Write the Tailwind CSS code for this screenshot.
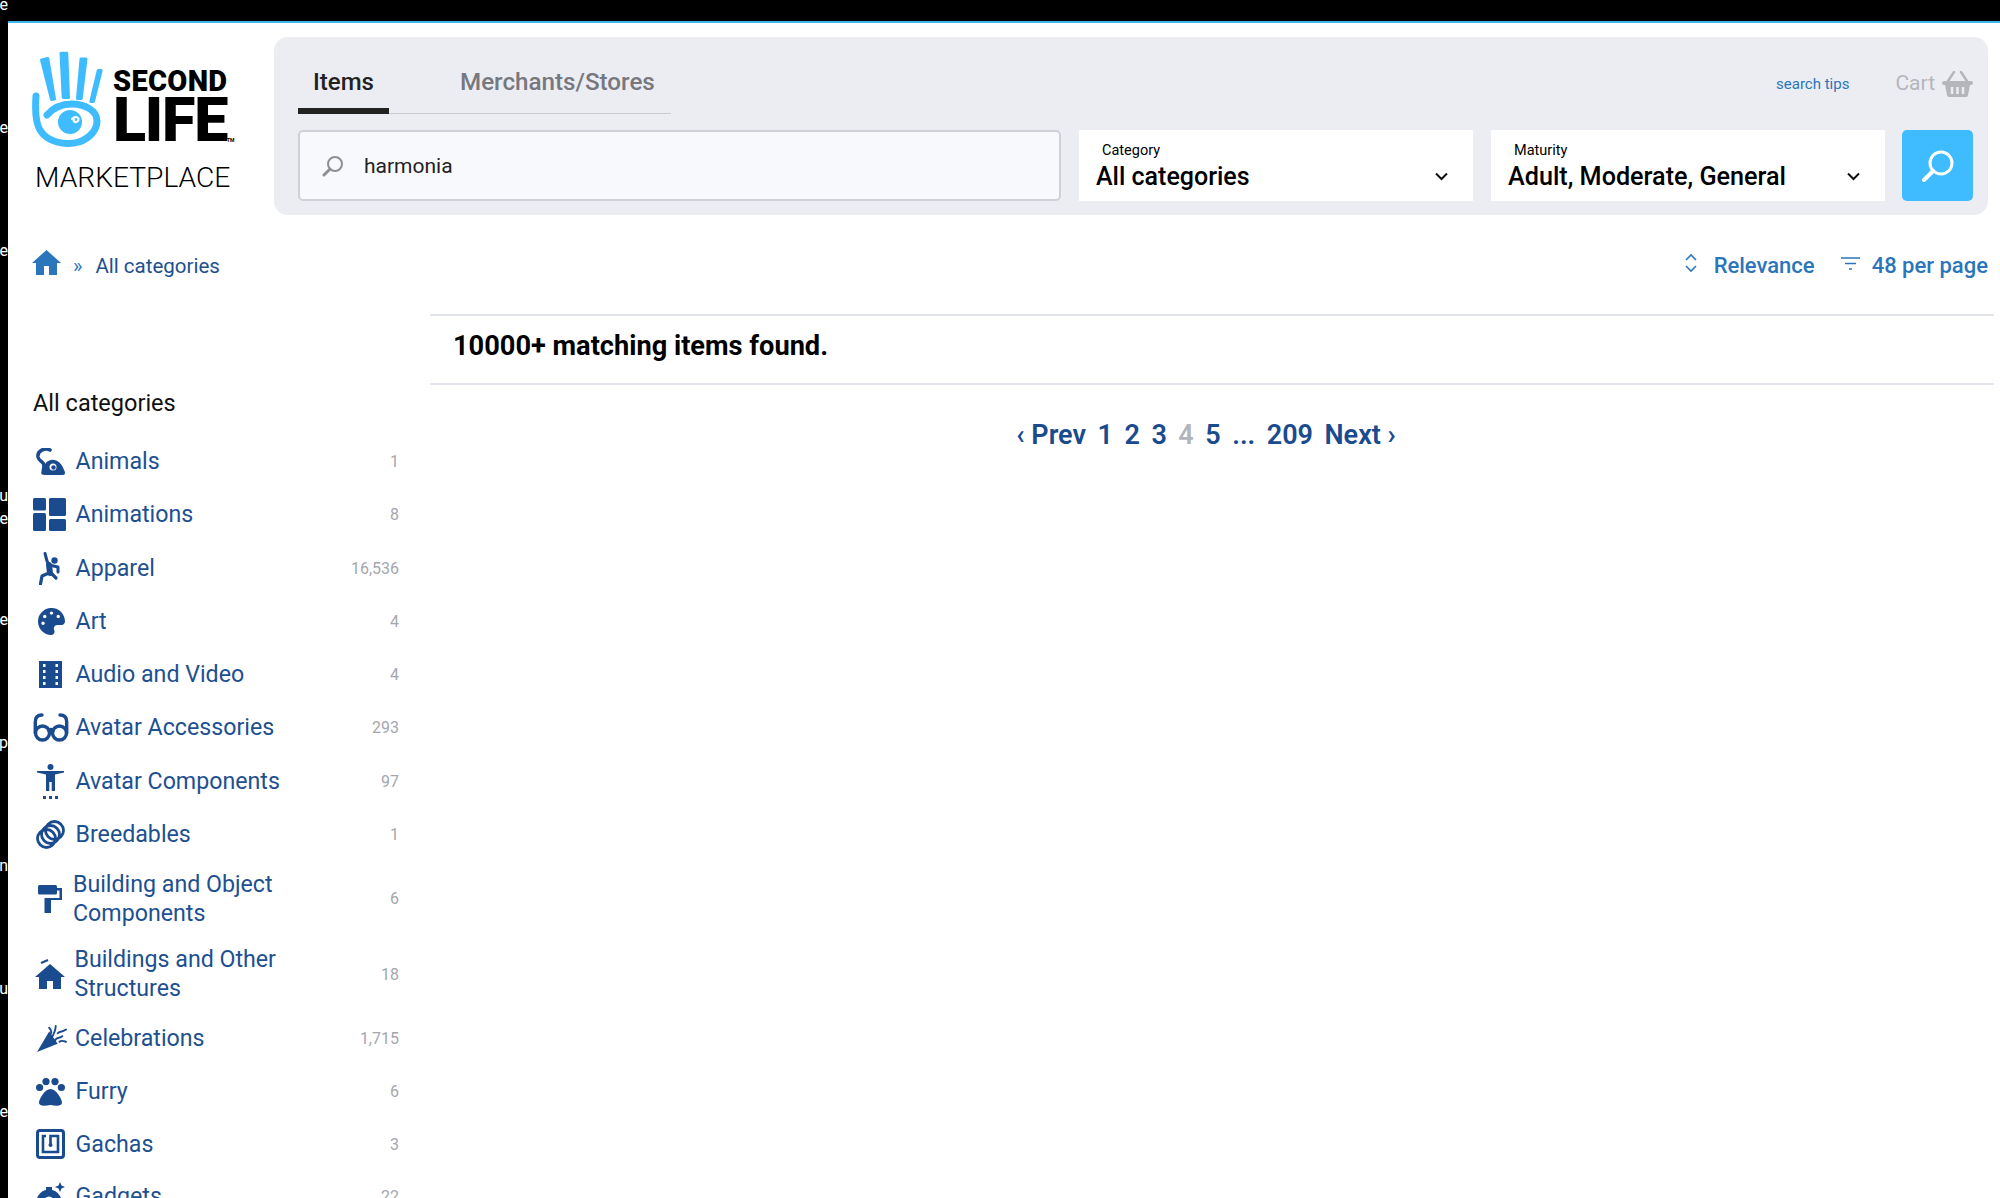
<!DOCTYPE html>
<html lang="en">
<head>
<meta charset="utf-8">
<title>Second Life Marketplace</title>
<script src="https://cdn.jsdelivr.net/npm/@tailwindcss/browser@4"></script>
</head>
<body class="m-0 h-[1198px] w-[2000px] overflow-hidden bg-white font-['Roboto',sans-serif]">
<div class="flex h-[1198px] w-[2000px] overflow-hidden">
  <div class="w-2 h-[1260px] bg-black overflow-hidden text-white text-[16px] leading-[23px] -mt-[57px] shrink-0 flex flex-col self-start">
    <div class="h-[123px] shrink-0 flex items-center justify-end whitespace-nowrap">e</div>
    <div class="h-[123px] shrink-0 flex items-center justify-end whitespace-nowrap">e</div>
    <div class="h-[123px] shrink-0 flex items-center justify-end whitespace-nowrap">pe</div>
    <div class="h-[123px] shrink-0"></div>
    <div class="h-[123px] shrink-0 flex flex-col items-end justify-center whitespace-nowrap pt-[20px]"><span>Su</span><span>He</span></div>
    <div class="h-[123px] shrink-0 flex items-center justify-end whitespace-nowrap">e</div>
    <div class="h-[123px] shrink-0 flex items-center justify-end whitespace-nowrap">p</div>
    <div class="h-[123px] shrink-0 flex items-center justify-end whitespace-nowrap">n</div>
    <div class="h-[123px] shrink-0 flex items-center justify-end whitespace-nowrap">u</div>
    <div class="h-[123px] shrink-0 flex items-center justify-end whitespace-nowrap">e</div>
  </div>

  <div class="flex-1 min-w-0 flex flex-col">
    <div class="h-[23px] shrink-0 bg-black border-b-2 border-[#3fb6ee]"></div>

    <header class="flex pt-[14px] pr-3">
      <div class="relative w-[266px] shrink-0 h-[178px]">
        <svg class="absolute left-[24px] top-[13px]" width="72" height="98" viewBox="0 0 72 98" fill="none" stroke="#3fbcff" stroke-linecap="round" stroke-linejoin="round" stroke-width="7">
          <g fill="#3fbcff" stroke-width="3">
            <path d="M9.5 10 L15.8 8.5 L22.5 49 L19.5 49.5Z"/>
            <path d="M29 3.2 L34.8 3.2 L36.5 47.5 L31.2 47.5Z"/>
            <path d="M49 9 L54 9 L49.2 48.5 L45.5 48.5Z"/>
            <path d="M66.2 20.5 L69.2 20.5 L61.5 51.5 L58.8 51.5Z"/>
          </g>
          <path d="M4 46 C3 60 3 72 8 80 C15 92 33 96 47 92 C58 88 65 80 65 71 C65 60 52 54 40 54 C30 54 21 58 15 65"/>
          <circle cx="38" cy="72" r="12" fill="#3fbcff" stroke="none"/>
          <path d="M40 69 C44 65 48 68 46 71 C44 73 41 72 42 70" stroke="#fff" stroke-width="2.2"/>
        </svg>
        <div class="absolute left-[105px] top-[32px] w-[115px] text-black font-['Roboto'] font-black">
          <div class="text-[29px] tracking-[0.3px] leading-[24px] h-[24px] overflow-hidden whitespace-nowrap">SECOND</div>
          <div class="text-[61px] leading-[54px] tracking-[-1.2px] whitespace-nowrap">LIFE</div>
        </div>
        <div class="absolute left-[219px] top-[101px] text-[5px] font-bold leading-none">TM</div>
        <div class="absolute left-[27px] top-[124px] text-[28.2px] leading-[34px] text-black font-light whitespace-nowrap">MARKETPLACE</div>
      </div>

      <div class="flex-1 h-[178px] rounded-[14px] bg-[#ecedf2] pl-[24px] pr-[15px] pt-[22px]">
        <div class="flex justify-between h-[71px]">
          <div class="flex w-[373px] h-[55px] border-b border-[#c9cad0]">
            <div class="w-[91px] h-[55px] border-b-[6px] border-[#222] pl-[15px] text-[24px] leading-[30px] pt-[8px] font-medium text-[#222]">Items</div>
            <div class="pl-[71px] text-[24.2px] leading-[30px] pt-[8px] font-medium text-[#77787f] whitespace-nowrap">Merchants/Stores</div>
          </div>
          <div class="flex items-center h-[52px] -mt-[1px]">
            <a class="text-[15px] text-[#2a75bb] mr-[46px]">search tips</a>
            <span class="text-[21px] text-[#b5b6bc]">Cart</span>
            <svg class="ml-[7px]" width="31" height="26" viewBox="0 0 31 26" fill="#b5b6bc">
              <path d="M2 10h27a2 2 0 0 1 0 4h-1l-2 10a2 2 0 0 1-2 2H7a2 2 0 0 1-2-2L3 14H2a2 2 0 0 1 0-4z"/>
              <path d="M6 10 L12 1 M25 10 L19 1" stroke="#b5b6bc" stroke-width="2.5" stroke-linecap="round"/>
              <path d="M10 16v7M15.5 16v7M21 16v7" stroke="#ecedf2" stroke-width="2.5"/>
            </svg>
          </div>
        </div>
        <div class="flex h-[71px]">
          <div class="w-[763px] h-[71px] rounded-[5px] border-2 border-[#cfd0d8] bg-[#f8f9fd] flex items-center pl-[22px]">
            <svg width="22" height="22" viewBox="0 0 22 22" fill="none" stroke="#8f8f92" stroke-width="2"><circle cx="13" cy="9" r="7"/><path d="M8 14 L2 20" stroke-width="3" stroke-linecap="round"/></svg>
            <span class="ml-[20px] text-[21px] text-[#222] pt-[2px]">harmonia</span>
          </div>
          <div class="ml-[18px] w-[394px] h-[71px] bg-white relative pl-[17px] pt-[12px]">
            <div class="pl-[6px] text-[14.5px] leading-[18px] text-black">Category</div>
            <div class="text-[25px] leading-[30px] pt-[2px] font-medium text-black">All categories</div>
            <svg class="absolute right-[25px] top-[42px]" width="13" height="9" viewBox="0 0 13 9" fill="none" stroke="#111" stroke-width="2"><path d="M1 1.5 L6.5 7 L12 1.5"/></svg>
          </div>
          <div class="ml-[18px] w-[394px] h-[71px] bg-white relative pl-[17px] pt-[12px]">
            <div class="pl-[6px] text-[14.5px] leading-[18px] text-black">Maturity</div>
            <div class="text-[25.2px] leading-[30px] pt-[2px] font-medium text-black whitespace-nowrap">Adult, Moderate, General</div>
            <svg class="absolute right-[25px] top-[42px]" width="13" height="9" viewBox="0 0 13 9" fill="none" stroke="#111" stroke-width="2"><path d="M1 1.5 L6.5 7 L12 1.5"/></svg>
          </div>
          <div class="ml-[17px] w-[71px] h-[71px] rounded-[5px] bg-[#3fbcff] flex items-center justify-center">
            <svg width="32" height="32" viewBox="0 0 32 32" fill="none" stroke="#fff" stroke-width="3"><circle cx="19" cy="13" r="11"/><path d="M11 21 L2 30" stroke-width="4" stroke-linecap="round"/></svg>
          </div>
        </div>
      </div>
    </header>

    <div class="flex justify-between items-center h-[46px] mt-[28px] pl-[24px] pr-[12px]">
      <div class="flex items-center">
        <svg class="-mt-[8px]" width="29" height="25" viewBox="0 0 29 25" fill="#2a75bb"><path d="M14.5 0 L29 13 H25 V25 H17 V16 H12 V25 H4 V13 H0 Z"/></svg>
        <span class="ml-[12px] text-[20px] text-[#2a75bb]">»</span>
        <a class="ml-[13px] text-[20.5px] text-[#1d4f91]">All categories</a>
      </div>
      <div class="flex items-center text-[22px] font-medium text-[#2a75bb] -mt-[2px]">
        <svg class="-mt-[4px]" width="14" height="20" viewBox="0 0 14 20" fill="none" stroke="#2a75bb" stroke-width="1.6"><path d="M2 7 L7 2 L12 7 M2 13 L7 18 L12 13"/></svg>
        <span class="ml-[16px]">Relevance</span>
        <svg class="ml-[26px] -mt-[4px]" width="19" height="13" viewBox="0 0 19 13" fill="none" stroke="#2a75bb" stroke-width="1.6"><path d="M0 1H19M4 6.5H15M8 12H11"/></svg>
        <span class="ml-[12px]">48 per page</span>
      </div>
    </div>

    <div class="flex flex-1 min-h-0">
      <aside class="w-[422px] shrink-0 pl-[25px] pr-[31px] pt-[99px]">
        <div class="text-[23.5px] leading-[30px] text-[#111]">All categories</div>
        <ul class="mt-[17px] text-[23.2px] leading-[29px] text-[#1d4f91]">
          <li class="flex items-center h-[53.25px]">
            <span class="w-[34px] flex justify-center shrink-0"><svg width="29" height="27" viewBox="0 0 29 27" fill="#1a4b8e"><path d="M8 27 H27 C29.5 27 29.5 24 28 22 C26 15 20 11 15 12 C9 13 6 20 8 27 Z"/><path d="M14 2 C9 -1 1 3 2 9 C3 14 8 13 8 18 L7 25" fill="none" stroke="#1a4b8e" stroke-width="3.5" stroke-linecap="round"/><circle cx="17" cy="19" r="3.5" fill="#fff"/><circle cx="17.5" cy="19.5" r="2.2"/></svg></span>
            <span class="ml-[8.5px] flex-1">Animals</span><span class="text-[16px] text-[#a5a6ad]">1</span>
          </li>
          <li class="flex items-center h-[53.25px]">
            <span class="w-[34px] flex justify-start shrink-0"><svg width="33" height="33" viewBox="0 0 33 33" fill="#1a4b8e"><rect x="0" y="0" width="13" height="12.5" rx="1.5"/><rect x="16" y="0" width="17" height="18" rx="1.5"/><rect x="0" y="15" width="13" height="18" rx="1.5"/><rect x="16" y="21" width="17" height="12" rx="1.5"/></svg></span>
            <span class="ml-[8.5px] flex-1">Animations</span><span class="text-[16px] text-[#a5a6ad]">8</span>
          </li>
          <li class="flex items-center h-[53.25px]">
            <span class="w-[34px] flex justify-center shrink-0"><svg width="22" height="33" viewBox="0 0 22 33" fill="none" stroke="#1a4b8e" stroke-linecap="round" stroke-linejoin="round"><circle cx="15.5" cy="8.5" r="3.2" fill="#1a4b8e" stroke="none"/><path d="M6 1.5 L8 9 L10 13 L19 15 L19 20" stroke-width="3"/><path d="M10 13 L11 21" stroke-width="6"/><path d="M10 21 L3 24 L1.5 32" stroke-width="3.2"/><path d="M12 21 L17 26" stroke-width="3.2"/></svg></span>
            <span class="ml-[8.5px] flex-1">Apparel</span><span class="text-[16px] text-[#a5a6ad]">16,536</span>
          </li>
          <li class="flex items-center h-[53.25px]">
            <span class="w-[34px] flex justify-center shrink-0 pl-[2px]"><svg width="27" height="27" viewBox="0 0 512 512" fill="#1a4b8e"><path d="M204.3 5C104.9 24.4 24.8 104.3 5.2 203.4c-37 187 131.7 326.4 258.8 306.7 41.2-6.4 61.4-54.6 42.5-91.7-23.1-45.4 9.9-98.4 60.9-98.4h79.7c35.8 0 64.8-29.6 64.9-65.3C511.5 97.1 368.1-26.9 204.3 5zM96 320c-17.7 0-32-14.3-32-32s14.3-32 32-32 32 14.3 32 32-14.3 32-32 32zm32-128c-17.7 0-32-14.3-32-32s14.3-32 32-32 32 14.3 32 32-14.3 32-32 32zm128-64c-17.7 0-32-14.3-32-32s14.3-32 32-32 32 14.3 32 32-14.3 32-32 32zm128 64c-17.7 0-32-14.3-32-32s14.3-32 32-32 32 14.3 32 32-14.3 32-32 32z"/></svg></span>
            <span class="ml-[8.5px] flex-1">Art</span><span class="text-[16px] text-[#a5a6ad]">4</span>
          </li>
          <li class="flex items-center h-[53.25px]">
            <span class="w-[34px] flex justify-center shrink-0 pl-[1px]"><svg width="23" height="27" viewBox="0 0 23 27"><rect width="23" height="27" fill="#1a4b8e"/><g fill="#fff"><rect x="4" y="3" width="2.5" height="3"/><rect x="4" y="9" width="2.5" height="3"/><rect x="4" y="15" width="2.5" height="3"/><rect x="4" y="21" width="2.5" height="3"/><rect x="16.5" y="3" width="2.5" height="3"/><rect x="16.5" y="9" width="2.5" height="3"/><rect x="16.5" y="15" width="2.5" height="3"/><rect x="16.5" y="21" width="2.5" height="3"/></g></svg></span>
            <span class="ml-[8.5px] flex-1">Audio and Video</span><span class="text-[16px] text-[#a5a6ad]">4</span>
          </li>
          <li class="flex items-center h-[53.25px]">
            <span class="w-[36px] -mr-[2px] flex justify-start shrink-0"><svg width="36" height="29" viewBox="0 0 36 29" fill="none" stroke="#1a4b8e" stroke-width="3.4" stroke-linecap="round"><circle cx="9.5" cy="20" r="7"/><circle cx="26.5" cy="20" r="7"/><path d="M16 18 C17 16 19 16 20 18"/><path d="M2.3 20 V9 C2.3 4 5 2 9 2"/><path d="M33.7 20 V9 C33.7 4 31 2 27 2"/></svg></span>
            <span class="ml-[8.5px] flex-1">Avatar Accessories</span><span class="text-[16px] text-[#a5a6ad]">293</span>
          </li>
          <li class="flex items-center h-[53.25px]">
            <span class="w-[34px] flex justify-center shrink-0"><svg width="27" height="35" viewBox="0 0 27 35" fill="#1a4b8e"><circle cx="13.5" cy="3" r="3"/><path d="M0 7 L27 7 L27 8.5 L18 10.5 L18 27 L14.7 27 L14.7 18 L12.3 18 L12.3 27 L9 27 L9 10.5 L0 8.5Z"/><rect x="6" y="32" width="3" height="3"/><rect x="12" y="32" width="3" height="3"/><rect x="18" y="32" width="3" height="3"/></svg></span>
            <span class="ml-[8.5px] flex-1">Avatar Components</span><span class="text-[16px] text-[#a5a6ad]">97</span>
          </li>
          <li class="flex items-center h-[53.25px]">
            <span class="w-[34px] flex justify-center shrink-0 pl-[1px]"><svg width="29" height="29" viewBox="0 0 29 29" fill="none" stroke="#1a4b8e" stroke-width="2.8"><circle cx="18.5" cy="10.5" r="9"/><circle cx="14.5" cy="14.5" r="9"/><circle cx="10.5" cy="18.5" r="9"/></svg></span>
            <span class="ml-[8.5px] flex-1">Breedables</span><span class="text-[16px] text-[#a5a6ad]">1</span>
          </li>
          <li class="flex items-center h-[75.5px]">
            <span class="w-[34px] flex justify-center shrink-0"><svg width="24" height="28" viewBox="0 0 24 28" fill="#1a4b8e"><rect width="19" height="9.5" rx="1.5"/><path d="M19 3 H24 V15 H13 V28 H6.5 V13 H21.5 V5.5 H19Z"/></svg></span>
            <span class="ml-[6px] flex-1 pr-[60px]">Building and Object Components</span><span class="text-[16px] text-[#a5a6ad]">6</span>
          </li>
          <li class="flex items-center h-[75.5px]">
            <span class="w-[34px] flex justify-center shrink-0"><svg width="30" height="30" viewBox="0 0 30 30" fill="#1a4b8e"><path d="M15 5 L30 18 H26 V30 H18 V22 H12 V30 H4 V18 H0 Z"/><path d="M6 4 L13 1" stroke="#1a4b8e" stroke-width="2" fill="none"/></svg></span>
            <span class="ml-[7.5px] flex-1 pr-[60px]">Buildings and Other Structures</span><span class="text-[16px] text-[#a5a6ad]">18</span>
          </li>
          <li class="flex items-center h-[53.25px]">
            <span class="w-[34px] flex justify-center shrink-0 pl-[4px]"><svg width="32" height="29" viewBox="0 0 32 29" fill="#1a4b8e"><path d="M0 29 L13 7 L22 20Z"/><path d="M13 3 C16 6 16 9 13 12 M20 1 C20 6 18 10 15 15 M19 17 C21 12 24 15 27 12 M22 9 C25 6 27 8 31 5 M24 18 C26 16 28 17 31 18" fill="none" stroke="#1a4b8e" stroke-width="2" stroke-linecap="round"/></svg></span>
            <span class="ml-[8px] flex-1">Celebrations</span><span class="text-[16px] text-[#a5a6ad]">1,715</span>
          </li>
          <li class="flex items-center h-[52.5px]">
            <span class="w-[34px] flex justify-center shrink-0 pl-[1px]"><svg width="29" height="28" viewBox="0 0 29 28" fill="#1a4b8e"><circle cx="3.6" cy="9.5" r="3.6"/><circle cx="10" cy="3.6" r="3.6"/><circle cx="19" cy="3.6" r="3.6"/><circle cx="25.4" cy="9.5" r="3.6"/><path d="M14.5 11 C9 11 3 21 3 24.5 C3 28.5 9 28 14.5 27 C20 28 26 28.5 26 24.5 C26 21 20 11 14.5 11Z"/></svg></span>
            <span class="ml-[8.5px] flex-1">Furry</span><span class="text-[16px] text-[#a5a6ad]">6</span>
          </li>
          <li class="flex items-center h-[52.5px]">
            <span class="w-[34px] flex justify-center shrink-0 pl-[1px]"><svg width="29" height="30" viewBox="0 0 29 30" fill="none" stroke="#1a4b8e"><rect x="1.5" y="1.5" width="26" height="27" rx="2.5" stroke-width="3"/><path d="M10 7 H7 V23 H22 V7 H14.5 V15" stroke-width="2.6"/><circle cx="14.5" cy="16" r="2" fill="#1a4b8e" stroke="none"/></svg></span>
            <span class="ml-[8.5px] flex-1">Gachas</span><span class="text-[16px] text-[#a5a6ad]">3</span>
          </li>
          <li class="flex items-center h-[53.25px]">
            <span class="w-[34px] flex justify-center shrink-0 pl-[1px]"><svg width="29" height="30" viewBox="0 0 29 30" fill="#1a4b8e"><circle cx="13" cy="20" r="9" fill="none" stroke="#1a4b8e" stroke-width="7"/><path d="M10 5h6v5h-6zM1 16h5v6H1zM20 16h5v6h-5z"/><path d="M24 0 L25.5 3.5 L29 5 L25.5 6.5 L24 10 L22.5 6.5 L19 5 L22.5 3.5Z"/></svg></span>
            <span class="ml-[8.5px] flex-1">Gadgets</span><span class="text-[16px] text-[#a5a6ad]">22</span>
          </li>
        </ul>
      </aside>

      <main class="flex-1 min-w-0 pt-[25px] pr-[6px]">
        <div class="h-[71px] border-y-2 border-[#e2e4ec] pl-[23px] flex items-center">
          <h1 class="text-[27.2px] font-bold text-black leading-[32px] -mt-[7px]">10000+ matching items found.</h1>
        </div>
        <nav class="mt-[32px] flex justify-center gap-[11.5px] text-[27px] leading-[36px] font-semibold text-[#1a4b8e] -ml-[12px]">
          <span>‹ Prev</span><span>1</span><span>2</span><span>3</span><span class="text-[#b4b5bb]">4</span><span>5</span><span>...</span><span>209</span><span>Next ›</span>
        </nav>
      </main>
    </div>
  </div>
</div>
</body>
</html>
